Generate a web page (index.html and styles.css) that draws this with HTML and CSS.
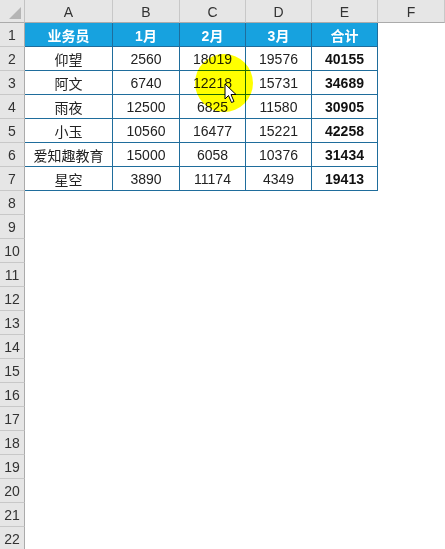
FILE: index.html
```html
<!DOCTYPE html>
<html lang="zh">
<head>
<meta charset="utf-8">
<link rel="stylesheet" href="styles.css">
</head>
<body>
<div class="sheet">
  <div class="grid">
    <div class="corner"><span class="tri"></span></div>
    <div class="ch">A</div><div class="ch">B</div><div class="ch">C</div><div class="ch">D</div><div class="ch">E</div><div class="ch">F</div>

    <div class="rh">1</div>
    <div class="c hd">业务员</div><div class="c hd">1月</div><div class="c hd">2月</div><div class="c hd">3月</div><div class="c hd">合计</div><div class="e"></div>

    <div class="rh">2</div>
    <div class="c">仰望</div><div class="c">2560</div><div class="c">18019</div><div class="c">19576</div><div class="c b">40155</div><div class="e"></div>

    <div class="rh">3</div>
    <div class="c">阿文</div><div class="c">6740</div><div class="c">12218</div><div class="c">15731</div><div class="c b">34689</div><div class="e"></div>

    <div class="rh">4</div>
    <div class="c">雨夜</div><div class="c">12500</div><div class="c">6825</div><div class="c">11580</div><div class="c b">30905</div><div class="e"></div>

    <div class="rh">5</div>
    <div class="c">小玉</div><div class="c">10560</div><div class="c">16477</div><div class="c">15221</div><div class="c b">42258</div><div class="e"></div>

    <div class="rh">6</div>
    <div class="c">爱知趣教育</div><div class="c">15000</div><div class="c">6058</div><div class="c">10376</div><div class="c b">31434</div><div class="e"></div>

    <div class="rh">7</div>
    <div class="c">星空</div><div class="c">3890</div><div class="c">11174</div><div class="c">4349</div><div class="c b">19413</div><div class="e"></div>

    <div class="rh">8</div><div class="blank"></div>
    <div class="rh">9</div><div class="blank"></div>
    <div class="rh">10</div><div class="blank"></div>
    <div class="rh">11</div><div class="blank"></div>
    <div class="rh">12</div><div class="blank"></div>
    <div class="rh">13</div><div class="blank"></div>
    <div class="rh">14</div><div class="blank"></div>
    <div class="rh">15</div><div class="blank"></div>
    <div class="rh">16</div><div class="blank"></div>
    <div class="rh">17</div><div class="blank"></div>
    <div class="rh">18</div><div class="blank"></div>
    <div class="rh">19</div><div class="blank"></div>
    <div class="rh">20</div><div class="blank"></div>
    <div class="rh">21</div><div class="blank"></div>
    <div class="rh">22</div><div class="blank"></div>
  </div>
  <div class="spot"></div>
  <svg class="cursor" width="14" height="21" viewBox="0 0 14 21">
    <path d="M1 1 L1 16 L4.5 12.5 L7.5 19.5 L10 18.5 L7 11.5 L12 11.5 Z" fill="#fff" stroke="#000" stroke-width="1" stroke-linejoin="miter"/>
  </svg>
</div>
</body>
</html>
```

FILE: styles.css
```css
html, body {
  margin: 0;
  padding: 0;
  background: #fff;
}
body {
  width: 445px;
  height: 549px;
  overflow: hidden;
}
.sheet {
  position: relative;
  width: 445px;
  height: 549px;
  overflow: hidden;
  font-family: "Liberation Sans", "Noto Sans CJK SC", sans-serif;
  font-size: 14px;
  color: #222;
}
.grid {
  display: grid;
  grid-template-columns: 25px 88px 67px 66px 66px 66px 67px;
  grid-template-rows: 23px repeat(22, 24px);
}
.grid > div {
  box-sizing: border-box;
  display: flex;
  align-items: center;
  justify-content: center;
}
.corner {
  position: relative;
  background: #e6e6e6;
  border-right: 1px solid #c3c3c3;
  border-bottom: 1px solid #ababab;
}
.tri {
  position: absolute;
  right: 3px;
  bottom: 3px;
  width: 0;
  height: 0;
  border-left: 12px solid transparent;
  border-bottom: 12px solid #b5b5b5;
}
.ch {
  background: #e6e6e6;
  border-right: 1px solid #c8c8c8;
  border-bottom: 1px solid #ababab;
  color: #333;
  padding-top: 2px;
}
.rh {
  background: #e6e6e6;
  border-right: 1px solid #ababab;
  border-bottom: 1px solid #c8c8c8;
  color: #333;
  font-size: 14px;
}
.c {
  border-right: 1px solid #1f6d9c;
  border-bottom: 1px solid #1f6d9c;
  background: #fff;
}
.hd {
  background: #17a2df;
  color: #fff;
  font-weight: bold;
}
.b {
  font-weight: bold;
  color: #111;
}
.e {
  background: #fff;
}
.blank {
  grid-column: span 6;
  background: #fff;
}
.spot {
  position: absolute;
  left: 195px;
  top: 54px;
  width: 58px;
  height: 58px;
  border-radius: 50%;
  background: #ffff00;
  mix-blend-mode: multiply;
}
.cursor {
  position: absolute;
  left: 224px;
  top: 83px;
}
```
